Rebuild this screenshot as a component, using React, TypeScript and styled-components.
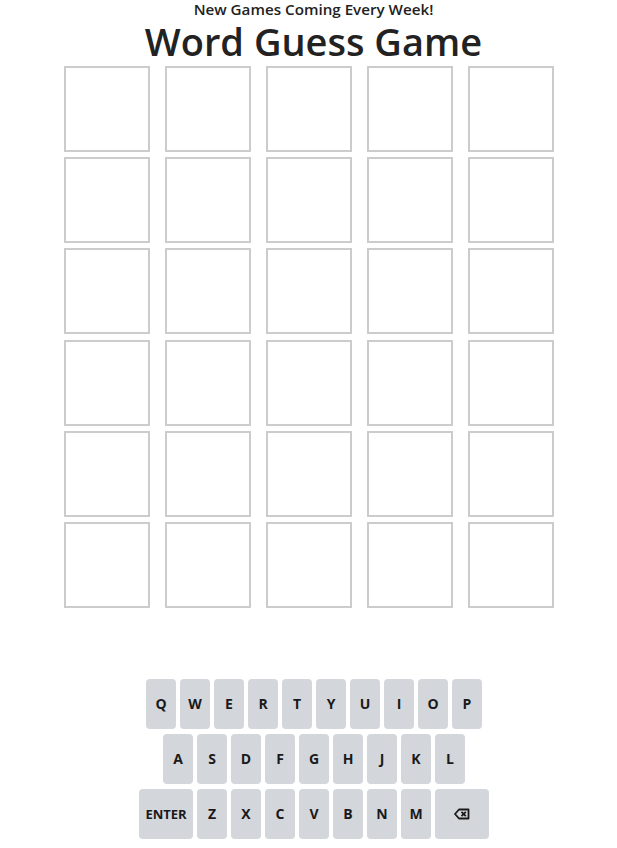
import React from "react";
import styled, { createGlobalStyle } from "styled-components";

const GlobalStyle = createGlobalStyle`
  html, body { margin: 0; padding: 0; background: #ffffff; }
  body { font-family: "Open Sans", "Noto Sans", sans-serif; color: #222222; }
`;

const Page = styled.div`
  width: 617px;
  display: flex;
  flex-direction: column;
  align-items: center;
`;

const Header = styled.header`
  display: flex;
  flex-direction: column;
  align-items: center;
  padding-left: 10px;
`;

const Tagline = styled.div`
  font-size: 15.2px;
  font-weight: 600;
  line-height: 18px;
`;

const Title = styled.h1`
  margin: 0;
  font-size: 38px;
  font-weight: 600;
  line-height: 47px;
`;

const Board = styled.div`
  display: grid;
  grid-template-columns: repeat(5, 86px);
  grid-auto-rows: 86px;
  column-gap: 15px;
  row-gap: 5.2px;
  margin-top: 1px;
`;

const Tile = styled.div`
  box-sizing: border-box;
  border: 2px solid #cccccc;
  background: #ffffff;
`;

const Keyboard = styled.div`
  display: flex;
  flex-direction: column;
  align-items: center;
  gap: 5px;
  margin-top: 71px;
  padding-left: 11px;
`;

const KeyRow = styled.div`
  display: flex;
  gap: 4px;
`;

const Key = styled.button<{ $wide?: boolean }>`
  box-sizing: border-box;
  width: ${(p) => (p.$wide ? "54px" : "30px")};
  height: 50px;
  border: none;
  border-radius: 4px;
  background: #d3d6da;
  color: #1a1a1a;
  font-family: "Open Sans", "Noto Sans", sans-serif;
  font-weight: 700;
  font-size: ${(p) => (p.$wide ? "13px" : "14px")};
  padding: 0;
  display: flex;
  align-items: center;
  justify-content: center;
`;

const rows = ["QWERTYUIOP", "ASDFGHJKL", "ZXCVBNM"];

const BackspaceIcon = () => (
  <svg width="16" height="12" viewBox="0 0 16 12" fill="none">
    <path d="M5 1.5 H14.5 V10.5 H5 L1 6 Z" stroke="#1a1a1a" strokeWidth="1.8" strokeLinejoin="round" />
    <path d="M7.5 3.8 L11.8 8.2 M11.8 3.8 L7.5 8.2" stroke="#1a1a1a" strokeWidth="1.8" />
  </svg>
);

export default function App() {
  return (
    <Page>
      <GlobalStyle />
      <Header>
        <Tagline>New Games Coming Every Week!</Tagline>
        <Title>Word Guess Game</Title>
      </Header>
      <Board>
        {Array.from({ length: 30 }).map((_, i) => (
          <Tile key={i} />
        ))}
      </Board>
      <Keyboard>
        <KeyRow>
          {rows[0].split("").map((l) => (
            <Key key={l}>{l}</Key>
          ))}
        </KeyRow>
        <KeyRow>
          {rows[1].split("").map((l) => (
            <Key key={l}>{l}</Key>
          ))}
        </KeyRow>
        <KeyRow>
          <Key $wide>ENTER</Key>
          {rows[2].split("").map((l) => (
            <Key key={l}>{l}</Key>
          ))}
          <Key $wide aria-label="backspace">
            <BackspaceIcon />
          </Key>
        </KeyRow>
      </Keyboard>
    </Page>
  );
}
